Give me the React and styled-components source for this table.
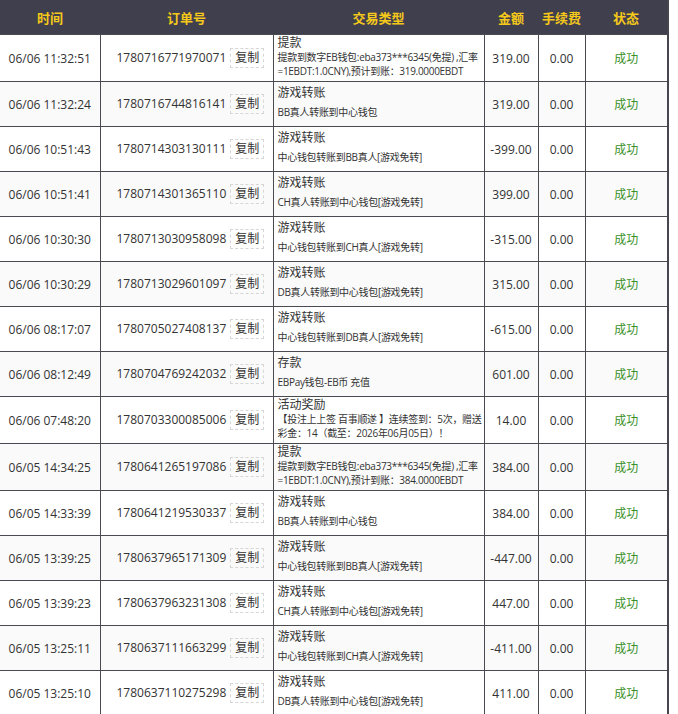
import styled, { createGlobalStyle } from 'styled-components';

const GlobalStyle = createGlobalStyle`
  body {
    margin: 0;
    background: #fff;
    font-family: "Open Sans", "Noto Sans CJK SC", sans-serif;
  }
`;

const records = [
  ['06/06 11:32:51', '1780716771970071', '提款', '提款到数字EB钱包:eba373***6345(免提) ,汇率=1EBDT:1.0CNY),预计到账：319.0000EBDT', '319.00', true],
  ['06/06 11:32:24', '1780716744816141', '游戏转账', 'BB真人转账到中心钱包', '319.00'],
  ['06/06 10:51:43', '1780714303130111', '游戏转账', '中心钱包转账到BB真人[游戏免转]', '-399.00'],
  ['06/06 10:51:41', '1780714301365110', '游戏转账', 'CH真人转账到中心钱包[游戏免转]', '399.00'],
  ['06/06 10:30:30', '1780713030958098', '游戏转账', '中心钱包转账到CH真人[游戏免转]', '-315.00'],
  ['06/06 10:30:29', '1780713029601097', '游戏转账', 'DB真人转账到中心钱包[游戏免转]', '315.00'],
  ['06/06 08:17:07', '1780705027408137', '游戏转账', '中心钱包转账到DB真人[游戏免转]', '-615.00'],
  ['06/06 08:12:49', '1780704769242032', '存款', 'EBPay钱包-EB币 充值', '601.00'],
  ['06/06 07:48:20', '1780703300085006', '活动奖励', '【投注上上签 百事顺遂 】连续签到：5次，赠送彩金：14（截至：2026年06月05日）！', '14.00', true],
  ['06/05 14:34:25', '1780641265197086', '提款', '提款到数字EB钱包:eba373***6345(免提) ,汇率=1EBDT:1.0CNY),预计到账：384.0000EBDT', '384.00', true],
  ['06/05 14:33:39', '1780641219530337', '游戏转账', 'BB真人转账到中心钱包', '384.00'],
  ['06/05 13:39:25', '1780637965171309', '游戏转账', '中心钱包转账到BB真人[游戏免转]', '-447.00'],
  ['06/05 13:39:23', '1780637963231308', '游戏转账', 'CH真人转账到中心钱包[游戏免转]', '447.00'],
  ['06/05 13:25:11', '1780637111663299', '游戏转账', '中心钱包转账到CH真人[游戏免转]', '-411.00'],
  ['06/05 13:25:10', '1780637110275298', '游戏转账', 'DB真人转账到中心钱包[游戏免转]', '411.00'],
];

const columns = [
  { title: '时间', width: 100 },
  { title: '订单号', width: 173 },
  { title: '交易类型', width: 211 },
  { title: '金额', width: 54 },
  { title: '手续费', width: 47 },
  { title: '状态', width: 83 },
];

const App = () => (
  <>
    <GlobalStyle />
    <Table>
      <colgroup>
        {columns.map((c) => (
          <col key={c.title} style={{ width: c.width }} />
        ))}
      </colgroup>
      <thead>
        <tr>
          {columns.map((c) => (
            <HeadCell key={c.title}>{c.title}</HeadCell>
          ))}
        </tr>
      </thead>
      <tbody>
        {records.map(([time, order, type, desc, amount, tall], i) => (
          <Row key={order} $striped={i % 2 === 1} $tall={tall}>
            <Cell>{time}</Cell>
            <OrderCell>
              {order}
              <CopyButton>复制</CopyButton>
            </OrderCell>
            <TypeCell $tall={tall}>
              <TypeTitle $tall={tall}>{type}</TypeTitle>
              <TypeDesc>{desc}</TypeDesc>
            </TypeCell>
            <Cell>{amount}</Cell>
            <Cell>0.00</Cell>
            <StatusCell>成功</StatusCell>
          </Row>
        ))}
      </tbody>
    </Table>
  </>
);

const Table = styled.table`
  width: 669px;
  border-collapse: collapse;
  table-layout: fixed;
  border-right: 2px solid #47464f;
`;

const HeadCell = styled.th`
  height: 34px;
  padding: 0;
  background: #403f4e;
  color: #f5c91a;
  font-size: 13px;
  font-weight: bold;
  text-align: center;
`;

const Row = styled.tr`
  height: ${(p) => (p.$tall ? 47 : 45)}px;
  background: ${(p) => (p.$striped ? '#fafafa' : '#ffffff')};
`;

const Cell = styled.td`
  padding: 0;
  border: 1px solid #4a4a50;
  border-left: none;
  color: #333;
  font-size: 12px;
  text-align: center;
  vertical-align: middle;
  &:not(:first-child) {
    border-left: 1px solid #4a4a50;
  }
`;

const OrderCell = styled(Cell)`
  text-align: left;
  padding-left: 16px;
  white-space: nowrap;
`;

const CopyButton = styled.span`
  display: inline-block;
  margin-left: 4px;
  padding: 1px 4px;
  border: 1px dashed #d6d6d6;
  font-size: 12px;
  line-height: 16px;
  color: #333;
`;

const TypeCell = styled(Cell)`
  text-align: left;
  padding: 0 0 ${(p) => (p.$tall ? 3 : 4)}px 4px;
`;

const TypeTitle = styled.div`
  font-size: 12px;
  line-height: ${(p) => (p.$tall ? 14 : 16)}px;
  margin-bottom: ${(p) => (p.$tall ? 0 : 4)}px;
  color: #333;
`;

const TypeDesc = styled.div`
  font-size: 10px;
  line-height: 14px;
  letter-spacing: -0.3px;
  color: #333;
`;

const StatusCell = styled(Cell)`
  color: #3b9129;
  font-size: 12px;
`;

export default App;
